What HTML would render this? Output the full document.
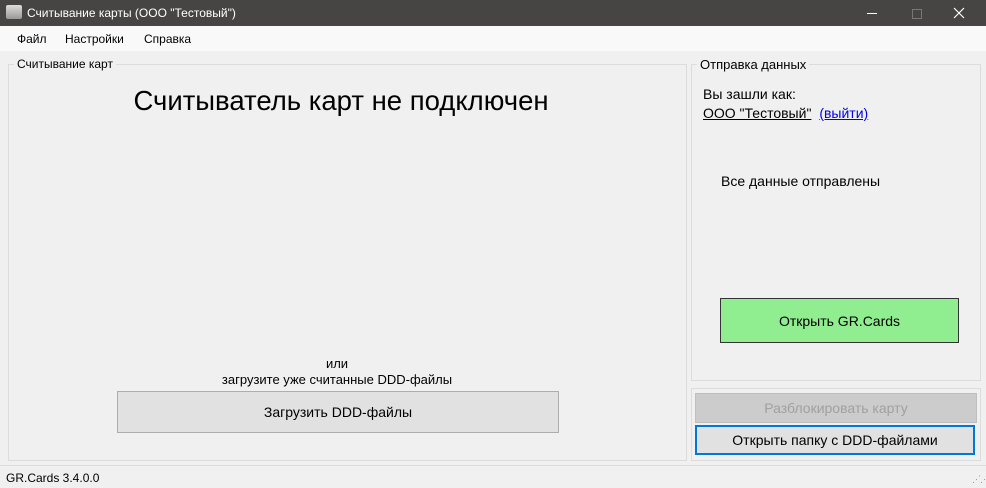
<html><head><style>
body{margin:0;width:986px;height:488px;background:#f0f0f0;font-family:"Liberation Sans",sans-serif;font-size:12px;color:#000;position:relative;overflow:hidden}
.a{position:absolute}
.box{position:absolute;border:1px solid #dcdcdc}
.lg{position:absolute;background:#f0f0f0;padding:0 3px;font-size:12px}
.btn{position:absolute;display:flex;align-items:center;justify-content:center;font-size:14px}
</style></head><body>
<div class="a" style="left:0;top:0;width:986px;height:26px;background:#474543;color:#fff;font-size:12px">
 <div class="a" style="left:6px;top:5px;width:16px;height:14px;background:linear-gradient(#ddd,#999);border-radius:2px"></div>
 <div class="a" style="left:27px;top:6px">Считывание карты (ООО "Тестовый")</div>
 <div class="a" style="left:867px;top:13px;width:10px;height:1px;background:#fff"></div>
 <div class="a" style="left:912px;top:9px;width:8px;height:8px;border:1px solid #777"></div>
 <svg class="a" style="left:953px;top:7px" width="12" height="12"><path d="M1 1L11 11M11 1L1 11" stroke="#fff" stroke-width="1.2"/></svg>
</div>
<div class="a" style="left:0;top:26px;width:986px;height:25px;background:#f9f9f9">
 <span class="a" style="left:17px;top:6px">Файл</span>
 <span class="a" style="left:65px;top:6px">Настройки</span>
 <span class="a" style="left:144px;top:6px">Справка</span>
</div>
<div class="box" style="left:8px;top:64px;width:677px;height:395px"></div>
<div class="lg" style="left:14px;top:57px">Считывание карт</div>
<div class="a" style="left:0;top:85px;width:682px;text-align:center;font-size:27.5px">Считыватель карт не подключен</div>
<div class="a" style="left:0;top:356px;width:674px;text-align:center;line-height:16px;font-size:13px">или<br>загрузите уже считанные DDD-файлы</div>
<div class="btn" style="left:117px;top:391px;width:440px;height:40px;background:#e1e1e1;border:1px solid #adadad">Загрузить DDD-файлы</div>
<div class="box" style="left:691px;top:64px;width:288px;height:315px"></div>
<div class="lg" style="left:697px;top:57px;font-size:13px">Отправка данных</div>
<div class="a" style="left:703px;top:86px;font-size:14px">Вы зашли как:</div>
<div class="a" style="left:703px;top:105px;font-size:14px"><u>ООО "Тестовый"</u> <u style="color:#0000ee;margin-left:4px">(выйти)</u></div>
<div class="a" style="left:721px;top:173px;font-size:14px">Все данные отправлены</div>
<div class="btn" style="left:720px;top:298px;width:237px;height:43px;background:#90ee90;border:1px solid #333">Открыть GR.Cards</div>
<div class="box" style="left:691px;top:388px;width:288px;height:71px"></div>
<div class="btn" style="left:695px;top:393px;width:280px;height:28px;background:#cccccc;border:1px solid #bfbfbf;color:#a0a0a0">Разблокировать карту</div>
<div class="btn" style="left:695px;top:425px;width:276px;height:26px;background:#e1e1e1;border:2px solid #0078d7">Открыть папку с DDD-файлами</div>
<div class="a" style="left:0;top:465px;width:986px;height:1px;background:#dcdcdc"></div>
<div class="a" style="left:6px;top:471px">GR.Cards 3.4.0.0</div>
<div class="a" style="left:972px;top:474px;color:#999;font-size:9px;letter-spacing:-1px">⋰⋰</div>
</body></html>
